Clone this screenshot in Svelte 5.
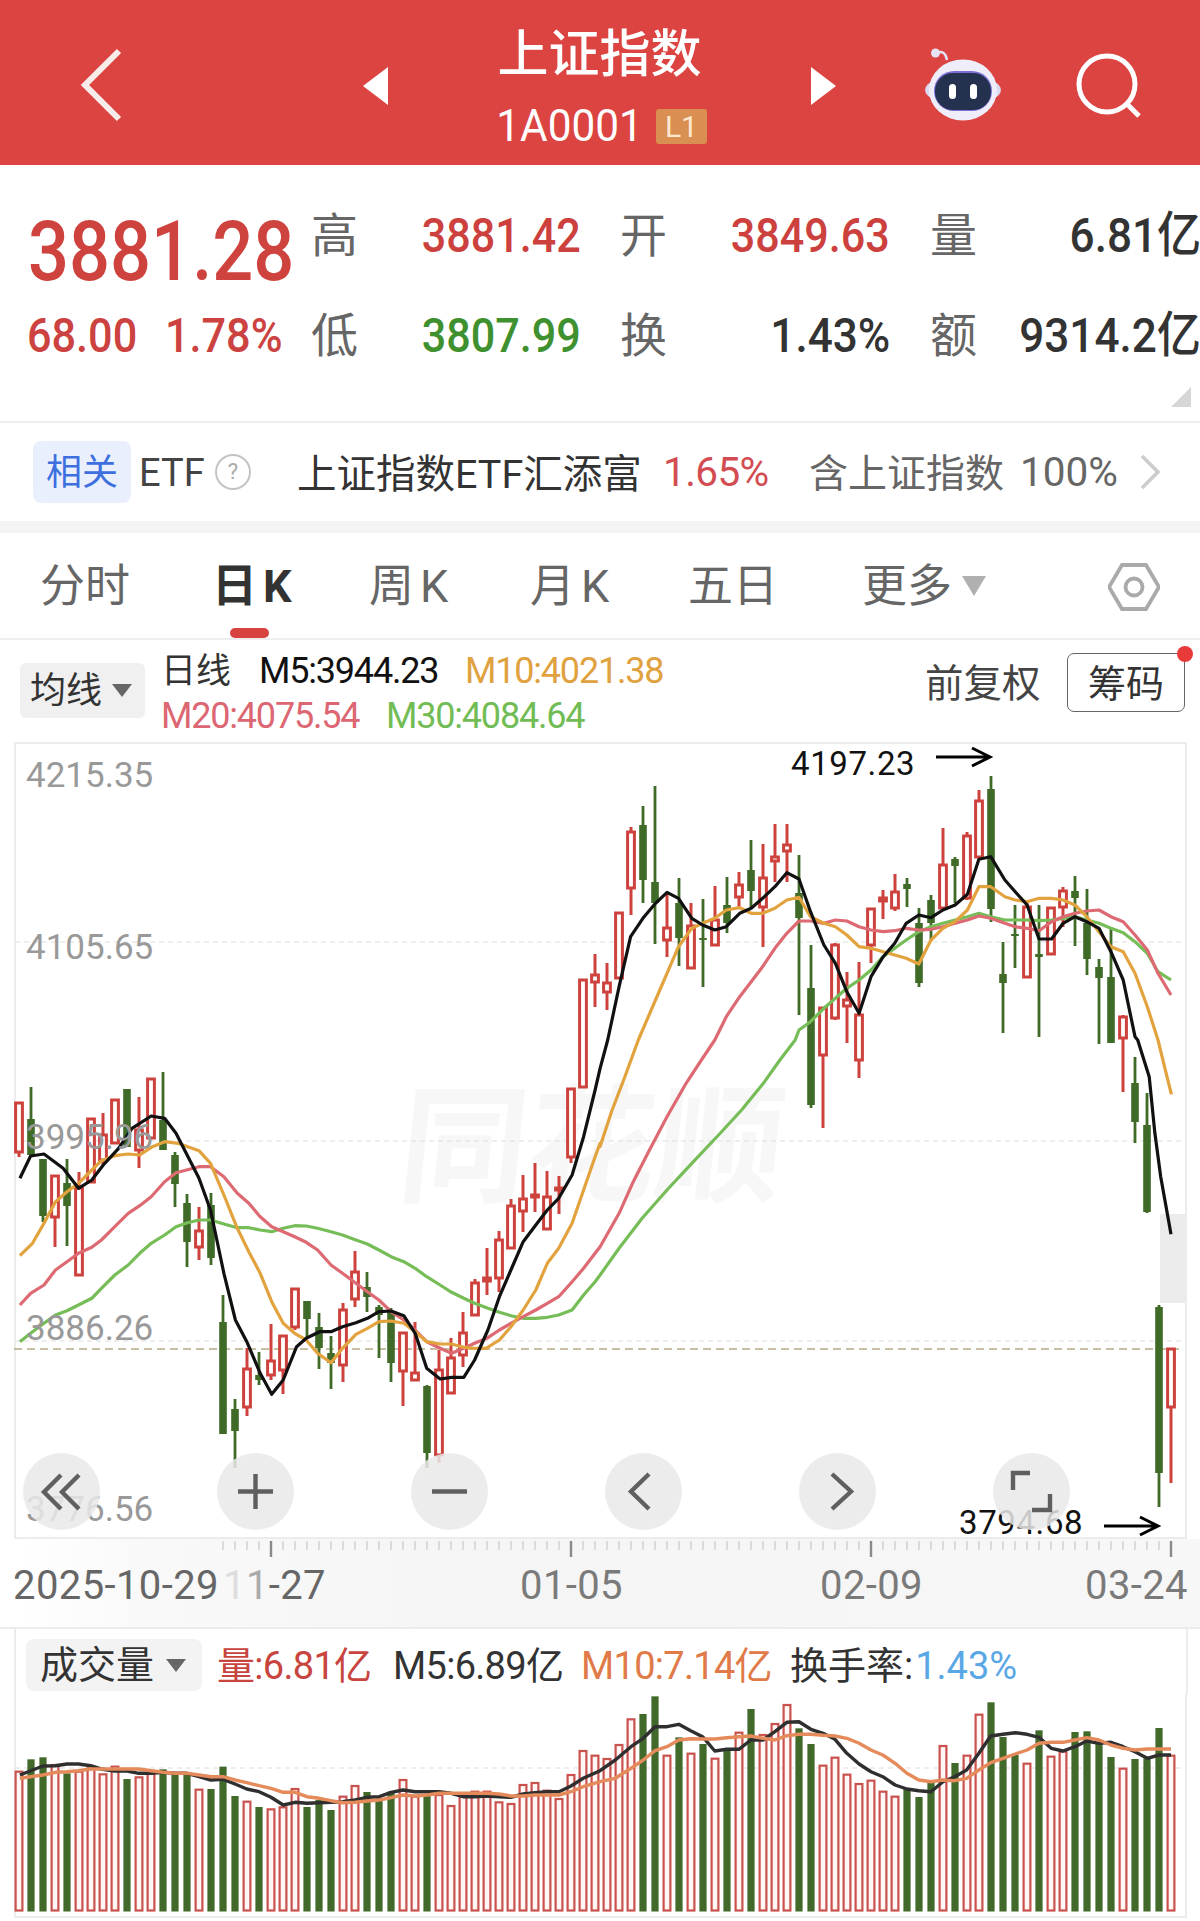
<script>
  const sx = 2.613;
  const map = (pts, ox, oy) => pts.map(([x, y]) => [ox + x / sx, oy + y / 3]);
  const L = (p) => map(p, 0, 1040);
  const U = (p) => map(p, 600, 540);
  const R = (p) => map(p, 600, 1040);
  const str = (p) => p.map(([x, y]) => x.toFixed(1) + ',' + y.toFixed(1)).join(' ');

  const candles = [
    ['r',1103,1103,1152,1157],['g',1087,1119,1155,1155],['g',1159,1159,1216,1222],['r',1176,1176,1217,1247],
    ['g',1159,1183,1206,1246],['r',1172,1188,1275,1275],['r',1119,1119,1182,1182],['r',1113,1135,1160,1165],
    ['r',1100,1100,1143,1143],['g',1089,1089,1147,1147],['r',1097,1130,1150,1168],['r',1079,1079,1138,1138],
    ['g',1072,1120,1150,1150],['g',1152,1155,1184,1207],['g',1194,1203,1242,1267],['r',1207,1231,1247,1260],
    ['g',1193,1205,1258,1265],['g',1295,1322,1434,1434],['g',1399,1409,1431,1468],['r',1348,1369,1407,1416],
    ['g',1352,1375,1380,1385],['r',1324,1361,1375,1380],['r',1335,1336,1370,1394],['r',1289,1289,1327,1330],
    ['g',1301,1301,1319,1337],['g',1313,1327,1348,1369],['g',1336,1353,1363,1389],['r',1303,1310,1365,1382],
    ['r',1251,1272,1299,1307],['g',1272,1287,1297,1312],['g',1305,1307,1315,1358],['g',1308,1312,1363,1382],
    ['r',1332,1333,1371,1406],['r',1322,1373,1380,1381],['g',1385,1386,1453,1468],['r',1350,1370,1455,1463],
    ['r',1338,1358,1393,1394],['r',1312,1333,1355,1367],['r',1279,1283,1315,1315],['r',1248,1278,1281,1295],
    ['r',1231,1240,1278,1292],['r',1199,1206,1248,1248],['r',1175,1199,1211,1232],['r',1163,1195,1197,1212],
    ['r',1171,1197,1229,1229],['r',1176,1188,1190,1214],['r',1089,1089,1157,1163],['r',980,980,1087,1087],
    ['r',954,975,982,1007],['r',963,983,992,1010],['r',913,913,978,978],['r',827,832,888,915],
    ['g',806,825,880,903],['g',786,882,903,944],['r',893,928,940,957],['g',878,903,938,966],
    ['r',903,926,968,968],['g',899,938,940,987],['r',886,920,945,946],['g',877,905,923,933],
    ['r',872,885,897,908],['g',840,870,891,908],['r',844,878,907,947],['r',824,857,861,882],
    ['r',824,845,851,882],['g',855,893,918,1015],['g',945,988,1105,1108],['r',1007,1008,1055,1128],
    ['r',943,945,1018,1020],['r',972,1000,1006,1043],['r',962,1015,1060,1078],['r',908,909,945,963],
    ['r',890,898,901,919],['r',874,892,908,911],['g',878,884,889,907],['g',908,923,983,987],
    ['g',895,900,923,941],['r',828,865,908,908],['g',857,859,866,903],['r',832,836,898,900],
    ['r',790,801,857,857],['g',776,789,909,922],['g',942,974,983,1033],['g',905,934,936,968],
    ['r',900,907,977,977],['g',905,954,957,1037],['r',908,908,954,954],['r',887,891,907,927],
    ['g',876,891,898,946],['g',889,923,959,975],['g',959,967,978,1044],['g',927,977,1043,1043],
    ['r',1015,1017,1038,1092],['g',1057,1083,1122,1143],['g',1093,1125,1212,1213],['g',1305,1307,1473,1507],
    ['r',1349,1349,1407,1483]
  ].map((c, i) => ({ x: 19 + 12 * i, c: c[0], wt: c[1], bt: c[2], bb: c[3], wb: c[4] }));

  const ma5 = [
    ...L([[52,415],[80,348],[115,342],[165,385],[205,445],[240,420],[270,375],[310,325],[345,265],[395,228],[430,235],[460,280],[520,415],[550,510],[585,700],[615,840],[645,905],[680,1000],[710,1063],[740,1020],[775,920],[800,895],[835,875],[865,875],[895,860],[930,848],[960,835],[990,815],[1022,813],[1055,827],[1085,880],[1115,985],[1150,1017],[1180,1012],[1212,1012],[1240,960],[1275,870],[1305,770],[1335,690],[1367,605],[1400,555],[1430,510],[1460,475],[1495,405],[1525,290],[1555,150],[1568,85]]),
    ...U([[20,1500],[50,1340],[80,1190],[112,1135],[145,1090],[175,1057],[205,1075],[240,1135],[268,1155],[300,1170],[330,1160],[365,1120],[395,1105],[425,1075],[457,1040],[488,998],[520,1017],[550,1115],[585,1215],[615,1270],[645,1355],[677,1420],[708,1310],[740,1250],[770,1210],[800,1150],[833,1125],[865,1133],[896,1110],[928,1095],[960,1063],[990,958],[1021,950],[1058,1020],[1085,1055],[1116,1095],[1147,1197],[1180,1197],[1210,1150],[1241,1130],[1272,1145],[1304,1165],[1335,1235],[1367,1320],[1398,1490]]),
    ...R([[1405,0],[1435,110],[1450,280],[1465,410],[1492,583]])
  ];
  const ma10 = [
    ...L([[52,647],[85,610],[115,550],[145,485],[175,455],[205,430],[240,390],[265,362],[300,347],[335,342],[365,345],[395,322],[430,305],[465,310],[520,332],[550,370],[585,465],[620,565],[650,635],[680,700],[710,785],[740,850],[770,880],[800,900],[830,940],[865,968],[895,925],[930,883],[960,865],[990,845],[1022,843],[1055,850],[1085,875],[1115,905],[1150,912],[1180,912],[1212,922],[1240,925],[1270,925],[1305,900],[1335,860],[1367,810],[1400,750],[1430,670],[1460,625],[1495,550],[1525,450],[1555,350],[1568,310]]),
    ...R([[0,320],[30,215],[65,110],[100,0]]),
    ...U([[145,1380],[175,1300],[205,1220],[240,1165],[268,1150],[300,1135],[330,1110],[365,1103],[395,1120],[425,1120],[457,1105],[488,1080],[520,1072],[550,1130],[585,1150],[615,1160],[645,1185],[677,1220],[708,1225],[740,1235],[770,1245],[800,1255],[833,1272],[865,1200],[896,1165],[928,1145],[960,1110],[990,1040],[1021,1040],[1058,1070],[1085,1080],[1116,1085],[1147,1075],[1180,1075],[1210,1080],[1241,1095],[1272,1130],[1304,1175],[1335,1220],[1367,1235],[1398,1300],[1430,1400],[1458,1500]]),
    ...R([[1475,80],[1493,163]])
  ];
  const ma20 = [
    ...L([[52,795],[80,760],[115,735],[145,690],[175,665],[205,640],[240,622],[265,600],[300,560],[335,520],[365,497],[395,470],[430,425],[460,398],[520,380],[550,380],[585,410],[620,460],[650,490],[680,530],[710,560],[740,575],[770,590],[800,607],[830,630],[865,675],[895,700],[930,730],[960,755],[990,780],[1022,815],[1055,840],[1085,870],[1115,905],[1150,925],[1180,940],[1212,925],[1240,910],[1275,893],[1305,870],[1335,850],[1367,830],[1400,810],[1430,790],[1460,770],[1495,725],[1525,685],[1555,640],[1568,620]]),
    ...R([[50,520],[85,430],[125,340],[175,230],[225,130],[265,60],[300,0]]),
    ...U([[330,1430],[365,1370],[395,1325],[425,1280],[457,1225],[488,1180],[520,1143],[550,1143],[585,1150],[615,1140],[645,1143],[677,1160],[708,1170],[740,1175],[770,1172],[800,1165],[833,1170],[865,1168],[896,1160],[928,1150],[960,1140],[990,1128],[1021,1135],[1058,1150],[1085,1160],[1116,1165],[1147,1172],[1180,1145],[1210,1130],[1241,1120],[1272,1113],[1304,1110],[1335,1130],[1367,1145],[1398,1185],[1430,1230],[1458,1300],[1492,1365]])
  ];
  const ma30 = [
    ...L([[52,905],[80,880],[115,850],[145,825],[175,812],[205,795],[240,775],[265,745],[300,705],[335,675],[365,640],[395,610],[430,585],[460,560],[490,548],[520,540],[550,540],[585,552],[620,563],[650,563],[680,570],[710,575],[740,565],[770,557],[800,558],[830,565],[865,575],[895,585],[930,600],[960,612],[990,630],[1022,650],[1055,665],[1085,685],[1115,710],[1150,735],[1180,757],[1212,775],[1240,790],[1275,805],[1305,817],[1335,827],[1367,835],[1400,835],[1430,832],[1460,825],[1495,810],[1525,765],[1555,725],[1568,705]]),
    ...R([[50,625],[110,535],[175,450],[240,370],[310,285],[370,210],[430,125],[470,60],[510,0]]),
    ...U([[520,1470],[550,1445],[585,1405],[615,1375],[645,1345],[677,1320],[708,1290],[740,1250],[770,1225],[800,1200],[833,1175],[865,1160],[896,1150],[928,1140],[960,1130],[990,1120],[1021,1130],[1058,1140],[1085,1140],[1116,1140],[1147,1142],[1180,1140],[1210,1135],[1241,1130],[1272,1140],[1304,1150],[1335,1165],[1367,1178],[1398,1205],[1430,1240],[1458,1295],[1492,1320]])
  ];

  const volRaw = 'r515 g478 g472 r495 g520 r515 r505 r523 r500 g537 r532 r520 g508 g525 g525 r569 g567 g500 g588 r605 g621 r628 r622 r567 g621 g600 g630 r590 r558 g576 g595 g575 r540 r590 g585 r585 r618 r590 r575 r575 r607 r612 r555 r549 r572 r597 r525 r453 r467 r477 r435 r358 g342 g289 r467 g412 r461 g432 r476 g450 r398 g327 r405 r372 r315 g385 g432 r497 r473 r524 r552 r542 r575 r590 g565 g591 g545 r438 g489 r467 r344 g307 g411 g465 r491 g391 r470 r455 g396 g394 g430 g471 r506 g477 g475 g384 r467';
  const bars = volRaw.split(' ').map((s, i) => ({ x: 19 + 12 * i, c: s[0], top: 1600 + Number(s.slice(1)) / 3 }));

  const V1 = (p) => map(p, 0, 1600);
  const V2 = (p) => map(p, 600, 1600);
  const vol5 = [
    ...V1([[52,525],[112,498],[145,497],[175,492],[205,492],[237,497],[268,508],[300,513],[332,513],[363,520],[395,520],[426,517],[457,520],[488,520],[520,530],[551,540],[583,538],[614,552],[645,567],[677,575],[708,592],[740,615],[771,607],[802,610],[834,608],[865,607],[896,605],[928,600],[959,592],[991,590],[1022,577],[1053,570],[1085,575],[1116,575],[1147,575],[1179,580],[1210,590],[1241,590],[1273,588],[1304,590],[1335,592],[1367,582],[1398,578],[1430,575],[1461,575],[1492,558],[1524,535],[1568,512]]),
    ...V2([[40,480],[81,440],[113,415],[144,380],[175,380],[206,373],[237,392],[268,410],[300,453],[331,448],[363,448],[394,420],[426,420],[457,395],[488,367],[520,365],[551,388],[583,400],[614,418],[645,460],[677,492],[708,515],[739,530],[771,555],[802,567],[833,572],[865,575],[896,545],[927,530],[958,510],[990,460],[1021,408],[1053,403],[1085,398],[1116,403],[1147,412],[1179,445],[1210,453],[1241,440],[1272,423],[1304,430],[1335,427],[1367,440],[1398,455],[1430,475],[1461,465],[1492,465]])
  ];
  const vol10 = [
    ...V1([[52,535],[112,525],[145,517],[175,515],[205,512],[237,507],[268,507],[300,507],[332,507],[363,507],[395,512],[426,517],[457,520],[488,520],[520,525],[551,530],[583,530],[614,540],[645,548],[677,557],[708,565],[740,577],[771,577],[802,590],[834,595],[865,602],[896,608],[928,607],[959,603],[991,600],[1022,593],[1053,585],[1085,588],[1116,585],[1147,580],[1179,580],[1210,580],[1241,580],[1273,580],[1304,582],[1335,588],[1367,588],[1398,585],[1430,585],[1461,585],[1492,575],[1524,560],[1568,545]]),
    ...V2([[40,535],[81,505],[113,480],[144,452],[175,440],[206,420],[237,416],[268,417],[300,417],[331,413],[363,410],[394,408],[426,415],[457,420],[488,407],[520,403],[551,403],[583,406],[614,408],[645,415],[677,430],[708,450],[739,465],[771,490],[802,520],[833,540],[865,545],[896,540],[927,542],[958,535],[990,510],[1021,488],[1053,475],[1085,462],[1116,450],[1147,430],[1179,427],[1210,427],[1241,420],[1272,413],[1304,420],[1335,435],[1367,445],[1398,450],[1430,447],[1461,447],[1492,447]])
  ];
  const ticks = Array.from({ length: 80 }, (_, i) => 223 + 12 * i);
  const longTicks = [271, 571, 871, 1171];

  const yLabels = [
    { text: '4215.35', cls: 'y1' }, { text: '4105.65', cls: 'y2' }, { text: '3995.96', cls: 'y3' },
    { text: '3886.26', cls: 'y4' }, { text: '3776.56', cls: 'y5' }
  ];
</script>

<div class="page">
  <header class="top">
    <svg class="back" viewBox="0 0 44 76"><polyline points="39,4 5,38 39,72" /></svg>
    <svg class="tri" viewBox="0 0 25 38"><polygon points="25,0 25,38 0,19" /></svg>
    <div class="title">
      <div class="name">上证指数</div>
      <div class="code"><span>1A0001</span><b>L1</b></div>
    </div>
    <svg class="tri tri-r" viewBox="0 0 25 38"><polygon points="0,0 25,19 0,38" /></svg>
    <svg class="robot" viewBox="0 0 80 76">
      <path class="ant" d="M13 6 C20 3 23 7 24 13" />
      <circle cx="12.5" cy="6" r="4.5" fill="#e6e3f6" />
      <ellipse cx="40" cy="43" rx="38" ry="15" fill="#dcdaf0" />
      <ellipse cx="40" cy="43" rx="34" ry="30.5" fill="#eeedf9" />
      <rect x="11" y="24" width="58" height="40" rx="20" fill="#7d6fd6" />
      <rect x="12" y="26" width="56" height="37" rx="18" fill="#243250" />
      <rect x="26" y="37" width="7" height="15" rx="3.5" fill="#fff" />
      <rect x="47" y="37" width="7" height="15" rx="3.5" fill="#fff" />
    </svg>
    <svg class="search" viewBox="0 0 70 70">
      <circle cx="31" cy="31" r="28" />
      <line x1="51" y1="51" x2="63" y2="63" />
    </svg>
  </header>

  <section class="stats">
    <div class="grid">
      <div class="price"><span class="big">3881.28</span></div>
      <div class="lab">高</div><div class="val up"><span>3881.42</span></div>
      <div class="lab c5">开</div><div class="val up"><span>3849.63</span></div>
      <div class="lab c8">量</div><div class="val dark"><span>6.81亿</span></div>

      <div class="chg"><span class="s1">68.00</span><span class="s2">1.78%</span></div>
      <div class="lab">低</div><div class="val down"><span>3807.99</span></div>
      <div class="lab c5">换</div><div class="val dark"><span>1.43%</span></div>
      <div class="lab c8">额</div><div class="val dark"><span>9314.2亿</span></div>
    </div>
    <svg class="corner" viewBox="0 0 20 20"><polygon points="20,0 20,20 0,20" /></svg>
  </section>

  <section class="etf">
    <span class="chip">相关</span>
    <span class="etf-word">ETF</span>
    <span class="help">?</span>
    <span class="fund">上证指数ETF汇添富</span>
    <span class="pct">1.65%</span>
    <span class="hold">含上证指数</span>
    <span class="hold-v">100%</span>
    <svg class="more" viewBox="0 0 22 36"><polyline points="2,2 18,18 2,34" /></svg>
  </section>
  <div class="band"></div>

  <nav class="tabs">
    <span class="tab plain">分时</span>
    <span class="tab on">日K</span>
    <span class="tab">周K</span>
    <span class="tab">月K</span>
    <span class="tab plain">五日</span>
    <span class="tab more-tab">更多<i class="caret"></i></span>
    <svg class="hex" viewBox="0 0 52 48">
      <polygon points="51,24 38,2 14,2 1,24 14,46 38,46" />
      <circle cx="26" cy="24" r="8.5" />
    </svg>
  </nav>

  <section class="legend">
    <div class="ma-chip">均线<i class="caret dark-caret"></i></div>
    <div class="lines">
      <div class="line l1">
        <span class="ri">日线</span><span class="m5">M5:3944.23</span><span class="m10">M10:4021.38</span>
      </div>
      <div class="line l2">
        <span class="m20">M20:4075.54</span><span class="m30">M30:4084.64</span>
      </div>
    </div>
    <div class="fq">前复权</div>
    <div class="chou">筹码<i class="dot"></i></div>
  </section>

  <section class="chart">
    <div class="watermark">同花顺</div>
    <svg class="kline" viewBox="0 742 1200 797">
      <rect x="15" y="743" width="1171" height="795" fill="none" stroke="#ececec" stroke-width="2" />
      {#each [942, 1141, 1341] as y}
        <line x1="15" x2="1185" y1={y} y2={y} stroke="#ddd" stroke-width="1.2" stroke-dasharray="5 4" />
      {/each}
      <rect x="1160" y="1214" width="26" height="89" fill="#ebebeb" />
      <line x1="14" x2="1184" y1="1349" y2="1349" stroke="#b8aa88" stroke-width="1.6" stroke-dasharray="8 5" />
      {#each candles as k}
        {#if k.c === 'r'}
          <line x1={k.x} x2={k.x} y1={k.wt} y2={k.wb} stroke="#cd423d" stroke-width="3" />
          <rect x={k.x - 3.4} y={k.bt} width="6.8" height={k.bb - k.bt} fill="#fff" stroke="#cd423d" stroke-width="3" />
        {:else}
          <line x1={k.x} x2={k.x} y1={k.wt} y2={k.wb} stroke="#3f6a27" stroke-width="2.8" />
          <rect x={k.x - 3.8} y={k.bt} width="7.6" height={k.bb - k.bt} fill="#3f6a27" />
        {/if}
      {/each}
      <polyline points={str(ma30)} class="ma" stroke="#76bd58" />
      <polyline points={str(ma20)} class="ma" stroke="#dd6a72" />
      <polyline points={str(ma10)} class="ma" stroke="#e2a33f" />
      <polyline points={str(ma5)} class="ma" stroke="#111" />
      <g class="arrow">
        <path d="M936 757 H990 M972 748 L990 757 L972 766" />
        <path d="M1104 1526 H1158 M1140 1517 L1158 1526 L1140 1535" />
      </g>
    </svg>
    {#each yLabels as l}
      <span class={'ylab ' + l.cls}>{l.text}</span>
    {/each}
    <span class="note hi">4197.23</span>
    <span class="note lo">3794.68</span>
    <div class="ctrl b1"><svg viewBox="0 0 77 77"><polyline points="38,22 21,39 38,56" /><polyline points="56,22 39,39 56,56" /></svg></div>
    <div class="ctrl b2"><svg viewBox="0 0 77 77"><path d="M21 38.5 H56 M38.5 21 V56" /></svg></div>
    <div class="ctrl b3"><svg viewBox="0 0 77 77"><path d="M21 38.5 H56" /></svg></div>
    <div class="ctrl b4"><svg viewBox="0 0 77 77"><polyline points="44,21 26,38.5 44,56" /></svg></div>
    <div class="ctrl b5"><svg viewBox="0 0 77 77"><polyline points="33,21 52,38.5 33,56" /></svg></div>
    <div class="ctrl b6"><svg viewBox="0 0 77 77"><path d="M37 20 H20 V37 M39 57 H57 V41" /></svg></div>
  </section>

  <section class="axis">
    <svg class="ruler" viewBox="0 0 1200 18">
      {#each ticks as t}
        <line x1={t} x2={t} y1="2" y2="11" stroke="#c8c8c8" stroke-width="1.2" />
      {/each}
      {#each longTicks as t}
        <line x1={t} x2={t} y1="2" y2="18" stroke="#8a8a8a" stroke-width="2.4" />
      {/each}
    </svg>
    <div class="dates">
      <span>2025-10-29</span>
      <span><em class="f1">1</em><em class="f2">1</em>-27</span>
      <span class="soft">01-05</span>
      <span class="soft">02-09</span>
      <span class="soft">03-24</span>
    </div>
  </section>

  <section class="volume">
    <div class="vol-legend">
      <div class="vol-chip">成交量<i class="caret dark-caret"></i></div>
      <span class="v-a">量:6.81亿</span>
      <span class="v-b">M5:6.89亿</span>
      <span class="v-c">M10:7.14亿</span>
      <span class="v-d">换手率:<u>1.43%</u></span>
    </div>
    <svg class="vol-svg" viewBox="0 1694 1200 227">
      <line x1="15" x2="15" y1="1694" y2="1917" stroke="#ececec" stroke-width="2" />
      <line x1="1186" x2="1186" y1="1694" y2="1917" stroke="#ececec" stroke-width="2" />
      <line x1="14" x2="1187" y1="1917" y2="1917" stroke="#ececec" stroke-width="2" />
      <line x1="15" x2="1185" y1="1768" y2="1768" stroke="#ddd" stroke-width="1.2" stroke-dasharray="5 4" />
      {#each bars as b}
        {#if b.c === 'r'}
          <rect x={b.x - 3.4} y={b.top} width="6.8" height={1910.5 - b.top} fill="#fff6f5" stroke="#c9524e" stroke-width="2.2" />
        {:else}
          <rect x={b.x - 3.6} y={b.top} width="7.2" height={1911.5 - b.top} fill="#41692a" />
        {/if}
      {/each}
      <polyline points={str(vol5)} class="vl" stroke="#2f2f2f" />
      <polyline points={str(vol10)} class="vl" stroke="#e58a5a" />
    </svg>
  </section>
</div>

<style>
  :global(body) { margin: 0; background: #fff; }
  .page {
    width: 1200px;
    height: 1921px;
    overflow: hidden;
    background: #fff;
    font-family: Roboto, "Noto Sans CJK SC", sans-serif;
    color: #333;
  }

  /* header */
  .top {
    height: 165px;
    background: #dc4442;
    display: flex;
    align-items: flex-start;
    color: #fff;
  }
  .back { width: 44px; height: 76px; margin: 47px 0 0 80px; flex: none; }
  .back polyline { fill: none; stroke: #f8ecea; stroke-width: 6; }
  .tri { width: 25px; height: 38px; margin: 67px 0 0 239px; flex: none; }
  .tri polygon { fill: #fff; }
  .tri-r { margin: 67px 0 0 0; }
  .title { width: 423px; margin-left: 0; flex: none; text-align: center; }
  .name { font-size: 51px; line-height: 50px; margin-top: 30px; font-weight: 500; }
  .code { display: flex; justify-content: center; align-items: center; margin-top: 28px; margin-left: -7px; height: 36px; }
  .code span { font-size: 45px; line-height: 36px; transform: scaleX(.94); transform-origin: right center; position: relative; left: 2px; }
  .code b {
    width: 51px; height: 35px; margin-left: 15px;
    background: #d98f52; border-radius: 3px;
    font-size: 30px; line-height: 35px; font-weight: 400; text-align: center; color: #ffe8d0;
  }
  .robot { width: 80px; height: 76px; margin: 47px 0 0 87px; flex: none; }
  .ant { fill: none; stroke: #e6e3f6; stroke-width: 2.5; }
  .search { width: 70px; height: 70px; margin: 53px 0 0 73px; flex: none; }
  .search circle, .search line { fill: none; stroke: #fff; stroke-width: 5; }

  /* stats */
  .stats { height: 258px; padding-top: 21px; box-sizing: border-box; border-bottom: 2px solid #eee; }
  .grid {
    display: grid;
    grid-template-columns: 311px 47px 223px 39px 48px 222px 40px 47px 224px;
    grid-template-rows: 100px 100px;
    align-items: center;
  }
  .lab { font-size: 47px; line-height: 50px; color: #666; }
  .c5 { grid-column: 5; }
  .c8 { grid-column: 8; }
  .val { font-size: 49px; font-weight: 500; line-height: 50px; text-align: right; }
  .val span { display: inline-block; transform: scaleX(.88); transform-origin: right center; white-space: nowrap; }
  .up { color: #cc413e; }
  .down { color: #3f902e; }
  .val.dark { color: #333; }
  .val.dark span { transform: scaleX(.9); }
  .price { align-self: start; padding: 31px 0 0 28px; line-height: 70px; height: 70px; }
  .big { display: inline-block; font-size: 83px; font-weight: 500; color: #cf433f; transform: scaleX(.87); transform-origin: left center; }
  .chg { display: flex; padding-left: 27px; font-size: 48px; font-weight: 500; color: #cc4240; line-height: 50px; }
  .chg span { display: inline-block; white-space: nowrap; transform: scaleX(.9); transform-origin: left center; }
  .s1 { width: 138px; }
  .corner { display: block; width: 20px; height: 20px; margin: 1px 0 0 1171px; }
  .corner polygon { fill: #d6d6d6; }

  /* etf */
  .etf { height: 98px; display: flex; align-items: center; white-space: nowrap; }
  .chip {
    flex: none; width: 98px; height: 62px; margin-left: 33px;
    background: #e9effc; color: #3d6fdf; border-radius: 8px;
    font-size: 36px; line-height: 65px; text-align: center;
  }
  .etf-word { flex: none; width: 66px; margin-left: 8px; font-size: 38px; color: #444; padding-top: 2px; }
  .help {
    flex: none; width: 32px; height: 32px; margin-left: 10px;
    border: 2px solid #c4c4c4; border-radius: 50%;
    font-size: 22px; line-height: 32px; text-align: center; color: #aaa;
  }
  .fund { flex: none; width: 341px; margin: 0 0 4px 46px; font-size: 39.5px; color: #333; }
  .pct { flex: none; width: 105px; margin-left: 25px; font-size: 40.5px; color: #d24c52; letter-spacing: -.6px; }
  .hold { flex: none; width: 195px; margin: 0 0 4px 41px; font-size: 39px; color: #666; }
  .hold-v { flex: none; width: 98px; margin-left: 16px; font-size: 40.5px; color: #666; }
  .more { flex: none; width: 22px; height: 36px; margin-left: 22px; }
  .more polyline { fill: none; stroke: #ccc; stroke-width: 3.6; }
  .band { height: 12px; background: #f4f4f4; }

  /* tabs */
  .tabs {
    height: 105px; box-sizing: content-box;
    border-bottom: 2px solid #eee;
    display: grid;
    grid-template-columns: 172px 157px 161px 158px 172px 248px 52px;
    padding-left: 40px;
    align-items: center;
    position: relative;
  }
  .tab { font-size: 45px; line-height: 50px; color: #666; letter-spacing: 6px; white-space: nowrap; margin-top: 3px; }
  .plain { letter-spacing: 0; }
  .on { font-weight: 700; color: #333; position: relative; }
  .on::after {
    content: ""; position: absolute; left: 18px; top: 66px;
    width: 39px; height: 10px; background: #d9433f; border-radius: 5px;
  }
  .more-tab { letter-spacing: 0; margin-left: 2px; }
  .caret {
    display: inline-block; width: 0; height: 0; margin-left: 10px; vertical-align: 6px;
    border-left: 12px solid transparent; border-right: 12px solid transparent; border-top: 20px solid #b0b0b0;
  }
  .dark-caret { border-left-width: 10px; border-right-width: 10px; border-top: 13px solid #666; }
  .hex { width: 52px; height: 48px; margin-top: 2px; }
  .hex polygon, .hex circle { fill: none; stroke: #aaa; stroke-width: 3.8; }

  /* legend */
  .legend { height: 102px; display: flex; align-items: flex-start; white-space: nowrap; }
  .ma-chip {
    flex: none; width: 125px; height: 55px; margin: 23px 0 0 20px; box-sizing: border-box; padding-left: 10px;
    background: #f0f0f0; border-radius: 6px; font-size: 36px; line-height: 56px; color: #333;
  }
  .ma-chip .caret { vertical-align: 6px; margin-left: 10px; }
  .lines { flex: none; width: 760px; margin-left: 16px; }
  .line { display: flex; font-size: 36px; letter-spacing: -1.2px; height: 45px; line-height: 45px; }
  .l1 { margin-top: 9px; padding-left: 3px; }
  .ri { width: 95px; font-size: 35px; letter-spacing: 0; color: #333; margin-left: -3px; padding-right: 3px; }
  .m5 { width: 206px; color: #111; }
  .m10 { color: #e0a13f; }
  .m20 { width: 225px; color: #dc6672; }
  .m30 { color: #72bc55; }
  .fq { flex: none; width: 142px; margin: 25px 0 0 4px; font-size: 38.5px; line-height: 38px; color: #444; }
  .chou {
    flex: none; width: 118px; height: 59px; box-sizing: border-box; margin-top: 13px; position: relative;
    border: 1.5px solid #666; border-radius: 7px; font-size: 38px; line-height: 60px; text-align: center; color: #333;
  }
  .dot { position: absolute; right: -9px; top: -8px; width: 16px; height: 16px; border-radius: 50%; background: #e93a3a; }

  /* chart */
  .chart { height: 797px; position: relative; }
  .kline { display: block; width: 1200px; height: 797px; position: relative; }
  .ma { fill: none; stroke-width: 3.2; stroke-linejoin: round; }
  .arrow path { fill: none; stroke: #000; stroke-width: 3; }
  .watermark {
    position: absolute; left: 400px; top: 342px;
    font-size: 128px; line-height: 128px; font-weight: 700; color: #f7f7f7; white-space: nowrap;
    transform: skewX(-6deg);
  }
  .ylab { position: absolute; left: 26px; font-size: 35px; line-height: 36px; color: #999; font-weight: 400; }
  .y1 { top: 16px; }
  .y2 { top: 188px; }
  .y3 { top: 378px; }
  .y4 { top: 569px; }
  .y5 { top: 750px; }
  .note { position: absolute; font-size: 33px; line-height: 36px; color: #111; letter-spacing: .6px; }
  .hi { left: 791px; top: 4px; }
  .lo { left: 959px; top: 763px; }
  .ctrl { position: absolute; top: 711px; width: 77px; height: 77px; border-radius: 50%; background: rgba(233,233,233,.85); }
  .ctrl svg { display: block; width: 77px; height: 77px; }
  .ctrl polyline, .ctrl path { fill: none; stroke: #5f5f5f; stroke-width: 4.4; }
  .b1 { left: 23px; }
  .b2 { left: 217px; }
  .b3 { left: 411px; }
  .b4 { left: 605px; }
  .b5 { left: 799px; }
  .b6 { left: 993px; }

  /* axis */
  .axis {
    height: 88px;
    background: linear-gradient(90deg, #fff 1.5%, #f9f9f9 12%, #f5f5f5 40%, #f7f7f7 100%);
  }
  .ruler { display: block; width: 1200px; height: 18px; }
  .dates {
    display: grid; grid-template-columns: 210px 297px 300px 265px auto; padding-left: 13px;
    margin-top: 9px; font-size: 40px; line-height: 40px; letter-spacing: .4px; color: #666; white-space: nowrap;
  }
  .dates em { font-style: normal; }
  .f1 { color: #ddd; }
  .f2 { color: #aaa; }
  .soft { color: #7a7a7a; }

  /* volume */
  .volume { height: 294px; border-top: 2px solid #ececec; box-sizing: border-box; }
  .vol-legend { height: 65px; display: flex; align-items: flex-start; white-space: nowrap; font-size: 38px; line-height: 44px; letter-spacing: -.7px; border-left: 2px solid #ececec; border-right: 2px solid #ececec; margin: 0 12px 0 14px; box-sizing: border-box; }
  .vol-chip {
    flex: none; width: 176px; height: 52px; margin: 10px 0 0 10px; box-sizing: border-box; padding-left: 14px;
    background: #f3f3f3; border-radius: 8px; font-size: 38px; line-height: 52px; letter-spacing: 0; color: #333;
  }
  .vol-chip .caret { vertical-align: 6px; margin-left: 12px; }
  .v-a, .v-b, .v-c, .v-d { flex: none; margin-top: 15px; }
  .v-a { width: 176px; margin-left: 15px; color: #c8453f; }
  .v-b { width: 188px; color: #333; }
  .v-c { width: 209px; color: #e07a48; }
  .v-d { color: #333; letter-spacing: 0; }
  .v-d u { text-decoration: none; color: #5aa7e6; margin-left: 2px; }
  .vol-svg { display: block; width: 1200px; height: 227px; }
  .vl { fill: none; stroke-width: 3.4; stroke-linejoin: round; }
</style>
